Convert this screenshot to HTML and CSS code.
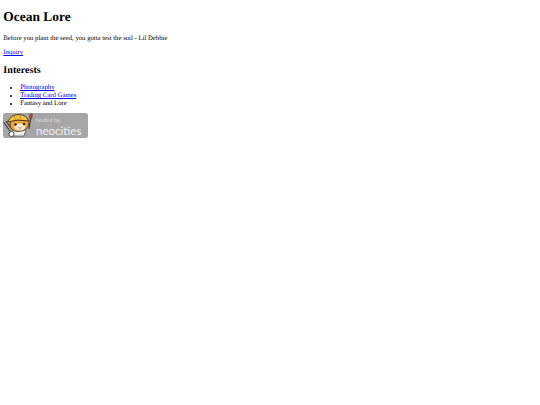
FILE: index.html
```html
<!DOCTYPE html>
<html lang="en">
<head>
<meta charset="utf-8">
<title>Ocean Lore</title>
<link rel="stylesheet" href="styles.css">
</head>
<body>
<h1>Ocean Lore</h1>
<p>Before you plant the seed, you gotta test the soil - Lil Debbie</p>
<p><a href="#">Inquiry</a></p>
<h2>Interests</h2>
<ul>
<li><a href="#">Photography</a></li>
<li><a href="#">Trading Card Games</a></li>
<li>Fantasy and Lore</li>
</ul>
<a href="#" class="badge">
<svg width="85" height="25" viewBox="0 0 85 25">
<rect x="0" y="0" width="85" height="25" rx="2.5" fill="#a6a6a6"/>
<path d="M0.5 9 L7 18 M3 8 L8 15" stroke="#3a3a3a" stroke-width="1.1" fill="none"/>
<path d="M26 16 L28 3" stroke="#5a3a2a" stroke-width="1.3" fill="none"/>
<path d="M26.5 5 L27 1 L29.5 1 L29 5 Z" fill="#c8503a" stroke="#3a2a1a" stroke-width=".5"/>
<path d="M9 17 L8 23 L21 23 L23 17 Z" fill="#eeeeea" stroke="#333" stroke-width=".6"/>
<circle cx="8.5" cy="21" r="2.6" fill="#f6f6f2" stroke="#222" stroke-width=".8"/>
<path d="M7 11 Q7 18 15 18.5 Q25 18 26 10 L25 7 L8 7 Z" fill="#eda43a" stroke="#3a2a1a" stroke-width=".8"/>
<ellipse cx="17" cy="14" rx="5.5" ry="3.6" fill="#fbe9cc"/>
<path d="M4.5 9 Q8 1.5 16 1.5 Q24 2 25.5 8 Q15 5.5 4.5 9 Z" fill="#f2c23f" stroke="#3a2a1a" stroke-width=".8"/>
<path d="M11 3 L12.5 7 M17 2 L17.5 6.5" stroke="#c98a22" stroke-width=".9"/>
<circle cx="12.5" cy="11.5" r="1.2" fill="#222"/>
<circle cx="21" cy="11" r="1.2" fill="#222"/>
<path d="M15.5 14.5 Q17 16.2 18.5 14.5" stroke="#a33" stroke-width=".7" fill="none"/>
<text x="33" y="8.5" class="badge-small">hosted by,</text>
<text x="33" y="21.5" class="badge-large">neocities</text>
</svg>
</a>
</body>
</html>
```
FILE: styles.css
```css
html, body {
  background: #fff;
}
body {
  margin: 3.36px;
  font-family: "Liberation Serif", "Times New Roman", serif;
  font-size: 6.72px;
  line-height: 7.7px;
  color: #000;
  text-rendering: geometricPrecision;
}
h1 {
  font-size: 13.44px;
  line-height: 15.4px;
  margin: 6px 0 10px;
}
h2 {
  font-size: 10.08px;
  line-height: 11.6px;
  margin: 8.5px 0 7.4px;
}
p {
  margin: 6.72px 0;
}
ul {
  margin: 6.72px 0 5.7px;
  padding-left: 16.8px;
}
a {
  color: #00e;
}
.badge {
  display: block;
  width: 85px;
  height: 25px;
}
.badge svg {
  display: block;
}
.badge-small {
  font-family: Lato, "Liberation Sans", sans-serif;
  font-size: 5.5px;
  fill: #dedede;
}
.badge-large {
  font-family: Lato, "Liberation Sans", sans-serif;
  font-size: 11.5px;
  fill: #f2f2f2;
}
```
